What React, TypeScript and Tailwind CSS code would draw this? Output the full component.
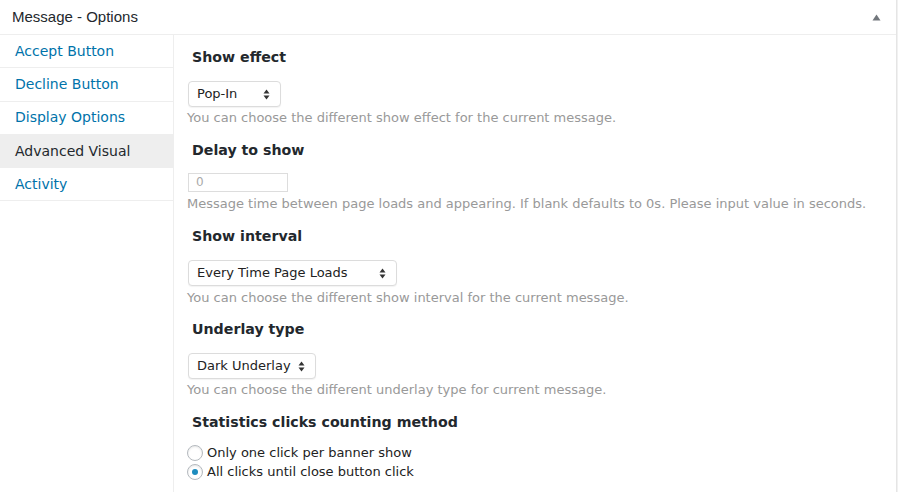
import React from 'react';

const tabs = [
  { label: 'Accept Button', active: false },
  { label: 'Decline Button', active: false },
  { label: 'Display Options', active: false },
  { label: 'Advanced Visual', active: true },
  { label: 'Activity', active: false },
];

function Arrows() {
  return (
    <svg width="7" height="11" viewBox="0 0 7 11" className="shrink-0">
      <path d="M3.5 0.5 L6.5 4.5 L0.5 4.5 Z" fill="#333" />
      <path d="M3.5 10.5 L6.5 6.5 L0.5 6.5 Z" fill="#333" />
    </svg>
  );
}

function FakeSelect({ value, width }: { value: string; width: string }) {
  return (
    <div
      className={`ml-[1px] flex items-center justify-between h-[26px] ${width} pl-[8px] pr-[10px] bg-white border border-[#dcdcdc] rounded-[4px] shadow-[0_1px_1px_rgba(0,0,0,0.05)] text-[13px] text-[#222]`}
    >
      <span>{value}</span>
      <Arrows />
    </div>
  );
}

function Heading({ children }: { children: React.ReactNode }) {
  return <h3 className="pl-[5px] text-[14.2px] leading-[20px] font-bold text-[#23282d]">{children}</h3>;
}

function Desc({ children, mt = 'mt-[2px]' }: { children: React.ReactNode; mt?: string }) {
  return <p className={`${mt} text-[13px] leading-[18px] text-[#999]`}>{children}</p>;
}

function Radio({ checked, label }: { checked: boolean; label: string }) {
  return (
    <label className="flex items-center gap-[4px] h-[19px] text-[13px] text-[#222]">
      <span className="flex items-center justify-center w-[16px] h-[16px] rounded-full border border-[#b4b9be] bg-white shadow-[inset_0_1px_2px_rgba(0,0,0,0.1)]">
        {checked && <span className="w-[6px] h-[6px] rounded-full bg-[#1e8cbe]" />}
      </span>
      {label}
    </label>
  );
}

export default function App() {
  return (
    <div className="flex h-[492px] w-[898px] bg-[#f1f1f1] overflow-hidden" style={{ fontFamily: '"DejaVu Sans", Verdana, sans-serif' }}>
      <div className="flex flex-col w-[897px] bg-white border-r border-[#e5e5e5]">
        {/* Header */}
        <div className="flex items-center justify-between h-[35px] pl-[12px] pr-[15px] border-b border-[#eee] shrink-0">
          <h2 className="text-[15px] text-[#23282d]" style={{ fontFamily: '"Liberation Sans", Arial, sans-serif' }}>
            Message - Options
          </h2>
          <svg width="9" height="7" viewBox="0 0 9 7">
            <path d="M4.5 0.5 L8.5 6.5 L0.5 6.5 Z" fill="#72777c" />
          </svg>
        </div>

        <div className="flex flex-1">
          {/* Sidebar */}
          <ul className="w-[174px] shrink-0 border-r border-[#eee]">
            {tabs.map((t) => (
              <li
                key={t.label}
                className={`flex items-center h-[33.3px] px-[15px] border-b border-[#eee] text-[14px] ${
                  t.active ? 'bg-[#eee] text-[#23282d]' : 'text-[#0073aa]'
                }`}
              >
                {t.label}
              </li>
            ))}
          </ul>

          {/* Content */}
          <div className="flex-1 pl-[13px] pt-[12px]">
            <Heading>Show effect</Heading>
            <div className="mt-[14px]">
              <FakeSelect value="Pop-In" width="w-[93px]" />
            </div>
            <Desc>You can choose the different show effect for the current message.</Desc>

            <div className="mt-[13px]">
              <Heading>Delay to show</Heading>
            </div>
            <div className="ml-[1px] mt-[13px] w-[100px] h-[19px] border border-[#ddd] px-[7px] text-[12px] leading-[17px] text-[#aaa]">0</div>
            <Desc mt="mt-[3px]">Message time between page loads and appearing. If blank defaults to 0s. Please input value in seconds.</Desc>

            <div className="mt-[13px]">
              <Heading>Show interval</Heading>
            </div>
            <div className="mt-[14px]">
              <FakeSelect value="Every Time Page Loads" width="w-[209px]" />
            </div>
            <Desc mt="mt-[3px]">You can choose the different show interval for the current message.</Desc>

            <div className="mt-[12px]">
              <Heading>Underlay type</Heading>
            </div>
            <div className="mt-[14px]">
              <FakeSelect value="Dark Underlay" width="w-[128px]" />
            </div>
            <Desc>You can choose the different underlay type for current message.</Desc>

            <div className="mt-[13px]">
              <Heading>Statistics clicks counting method</Heading>
            </div>
            <div className="mt-[11px] flex flex-col">
              <Radio checked={false} label="Only one click per banner show" />
              <Radio checked label="All clicks until close button click" />
            </div>
          </div>
        </div>
      </div>
    </div>
  );
}
